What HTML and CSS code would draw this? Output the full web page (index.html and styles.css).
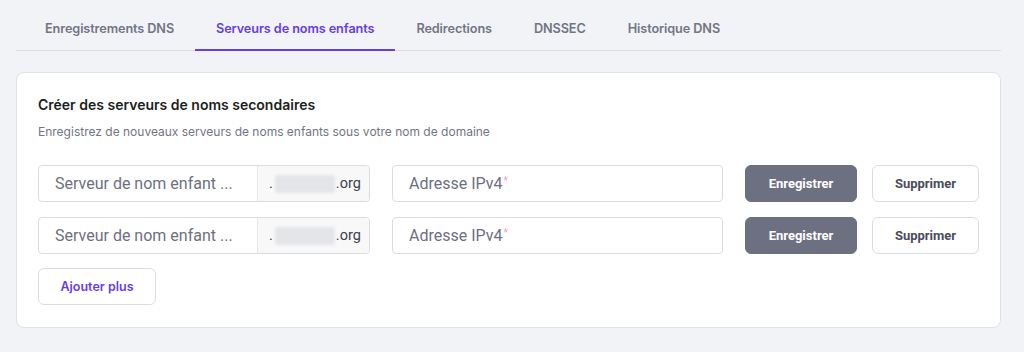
FILE: index.html
```html
<!DOCTYPE html>
<html lang="fr">
<head>
<meta charset="utf-8">
<link rel="stylesheet" href="styles.css">
</head>
<body>
<div class="page">
  <nav class="tabs">
    <div class="tab">Enregistrements DNS</div>
    <div class="tab active">Serveurs de noms enfants</div>
    <div class="tab">Redirections</div>
    <div class="tab">DNSSEC</div>
    <div class="tab">Historique DNS</div>
  </nav>
  <section class="card">
    <h2 class="title">Créer des serveurs de noms secondaires</h2>
    <p class="subtitle">Enregistrez de nouveaux serveurs de noms enfants sous votre nom de domaine</p>
    <div class="rows">
      <div class="row">
        <div class="field split">
          <span class="ph">Serveur de nom enfant ...</span>
          <span class="suffix">.<span class="blur"></span>.org</span>
        </div>
        <div class="field ip"><span class="ph">Adresse IPv4</span><span class="req">*</span></div>
        <button class="btn primary">Enregistrer</button>
        <button class="btn ghost">Supprimer</button>
      </div>
      <div class="row">
        <div class="field split">
          <span class="ph">Serveur de nom enfant ...</span>
          <span class="suffix">.<span class="blur"></span>.org</span>
        </div>
        <div class="field ip"><span class="ph">Adresse IPv4</span><span class="req">*</span></div>
        <button class="btn primary">Enregistrer</button>
        <button class="btn ghost">Supprimer</button>
      </div>
    </div>
    <button class="btn add">Ajouter plus</button>
  </section>
</div>
</body>
</html>
```

FILE: styles.css
```css
* { box-sizing: border-box; }
html, body { margin: 0; padding: 0; }
body {
  background: #f2f3f6;
  font-family: Inter, "Noto Sans", sans-serif;
  width: 1024px;
  height: 352px;
  overflow: hidden;
}
.page {
  padding: 0 23px 0 16px;
}
.tabs {
  display: flex;
  height: 51px;
  padding: 0 0 0 8px;
  border-bottom: 1px solid #dcdde2;
  align-items: stretch;
}
.tab {
  padding: 0 21px;
  font-size: 12.7px;
  font-weight: 600;
  color: #727586;
  display: flex;
  align-items: center;
  padding-top: 8px;
  border-bottom: 2px solid transparent;
  margin-bottom: -1px;
  letter-spacing: -0.1px;
}
.tab.active {
  color: #673de6;
  border-bottom-color: #673de6;
}
.card {
  margin-top: 21px;
  background: #fff;
  border: 1px solid #e1e2e7;
  border-radius: 8px;
  padding: 22px 21px 22px 21px;
}
.title {
  margin: 0;
  font-size: 14px;
  line-height: 20px;
  font-weight: 600;
  color: #1d1e20;
}
.subtitle {
  margin: 8px 0 0;
  font-size: 12px;
  line-height: 18px;
  color: #727586;
}
.rows {
  margin-top: 24px;
  display: flex;
  flex-direction: column;
  gap: 15px;
}
.row {
  display: flex;
  height: 37px;
}
.field {
  border: 1px solid #dadce0;
  border-radius: 4px;
  display: flex;
  align-items: center;
  font-family: Roboto, "Liberation Sans", sans-serif;
  font-size: 16px;
  color: #6d7081;
  background: #fff;
}
.split {
  width: 332px;
  padding: 0;
  overflow: hidden;
}
.split .ph {
  flex: 1;
  padding-left: 16px;
}
.suffix {
  width: 112px;
  height: 100%;
  border-left: 1px solid #e6e7ea;
  background: #f8f8f9;
  display: flex;
  align-items: center;
  padding-left: 11px;
  font-size: 14.5px;
  color: #3b3d4a;
}
.blur {
  display: inline-block;
  width: 60px;
  height: 18px;
  margin: 0 1px 0 2px;
  background: #e4e5e8;
  border-radius: 3px;
  filter: blur(1.5px);
}
.ip {
  width: 331px;
  margin-left: 22px;
  padding-left: 16px;
}
.req {
  color: #fc5185;
  font-size: 10px;
  align-self: flex-start;
  margin-top: 9px;
  margin-left: 1px;
  opacity: 0.6;
}
.btn {
  font-family: Roboto, "Liberation Sans", sans-serif;
  font-weight: 700;
  font-size: 13px;
  border-radius: 6px;
  cursor: pointer;
  display: flex;
  align-items: center;
  justify-content: center;
  padding: 0;
}
.primary {
  margin-left: 22px;
  width: 112px;
  background: #6d7081;
  color: #fff;
  border: 1px solid #6d7081;
}
.ghost {
  margin-left: 15px;
  width: 107px;
  background: #fff;
  color: #4a4c5d;
  border: 1px solid #dadce0;
}
.add {
  margin-top: 14px;
  width: 118px;
  height: 37px;
  background: #fff;
  color: #673de6;
  border: 1px solid #dadce0;
  font-family: Inter, "Noto Sans", sans-serif;
  font-weight: 600;
  font-size: 12.5px;
}
```
